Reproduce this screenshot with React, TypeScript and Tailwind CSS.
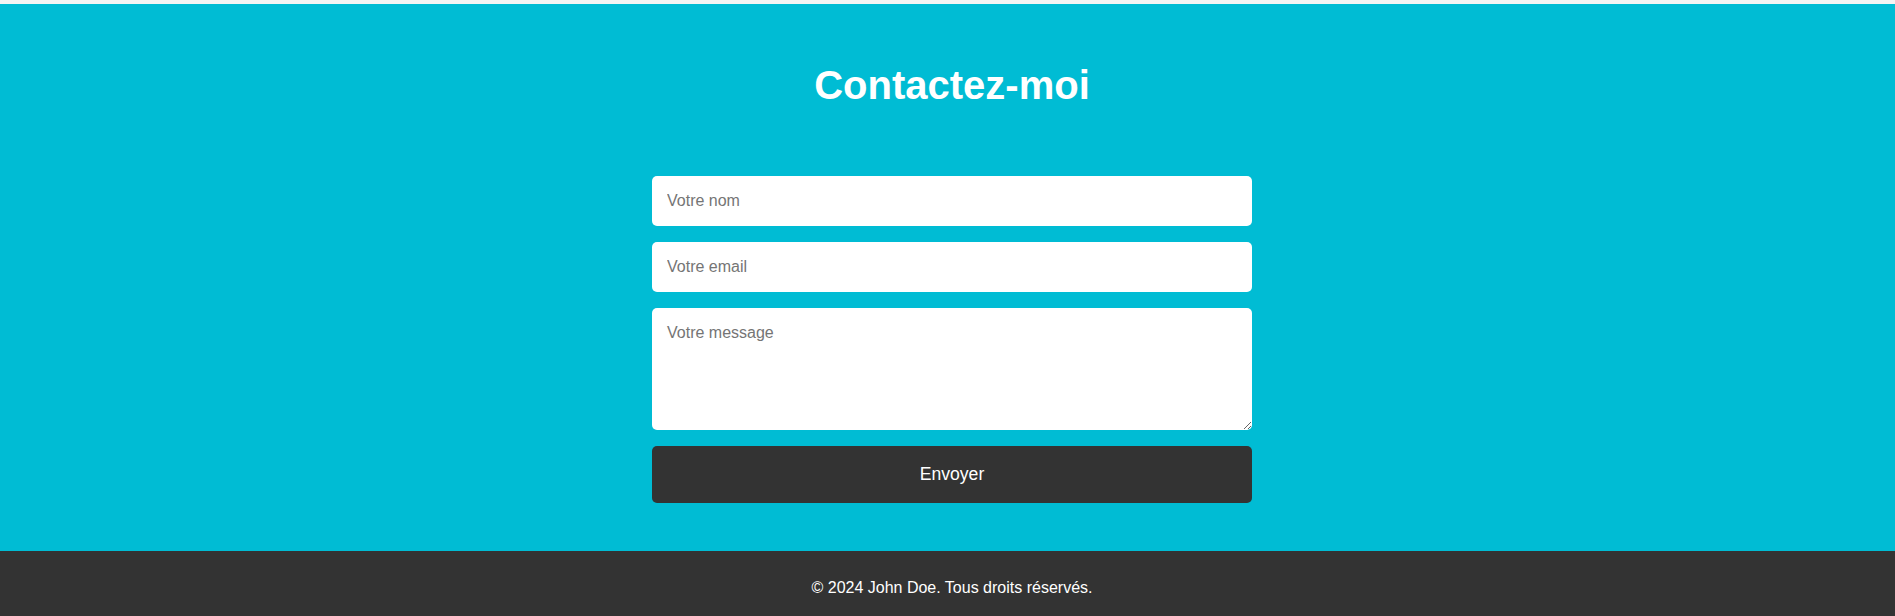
import React from 'react';

const font = { fontFamily: '"Liberation Sans", Arial, sans-serif' };

export default function App() {
  return (
    <div className="min-h-[616px] bg-[#f4f4f4] pt-[4px]" style={font}>
      <section className="bg-[#00bcd4] pl-[9px] pt-[59px] pb-[48px]">
        <h2 className="text-center text-[40px] font-bold leading-[44px] text-white">
          Contactez-moi
        </h2>
        <form
          className="mx-auto mt-[69px] flex w-[600px] flex-col gap-[16px]"
          onSubmit={(e) => e.preventDefault()}
        >
          <input
            type="text"
            placeholder="Votre nom"
            className="h-[50px] w-full rounded-[5px] bg-white px-[15px] text-[16px] leading-[normal] text-[#333] placeholder:text-[#757575] outline-none"
          />
          <input
            type="email"
            placeholder="Votre email"
            className="h-[50px] w-full rounded-[5px] bg-white px-[15px] text-[16px] leading-[normal] text-[#333] placeholder:text-[#757575] outline-none"
          />
          <textarea
            placeholder="Votre message"
            className="block h-[122px] w-full resize rounded-[5px] bg-white px-[15px] pt-[16px] pb-[14px] text-[16px] leading-[normal] text-[#333] placeholder:text-[#757575] outline-none"
          />
          <button
            type="submit"
            className="h-[57px] w-full rounded-[5px] bg-[#333] text-[17.6px] leading-[normal] text-white"
          >
            Envoyer
          </button>
        </form>
      </section>
      <footer className="bg-[#333] pl-[9px] pt-[28px] pb-[28px] text-center">
        <p className="text-[16px] leading-[normal] text-white">
          © 2024 John Doe. Tous droits réservés.
        </p>
      </footer>
    </div>
  );
}
